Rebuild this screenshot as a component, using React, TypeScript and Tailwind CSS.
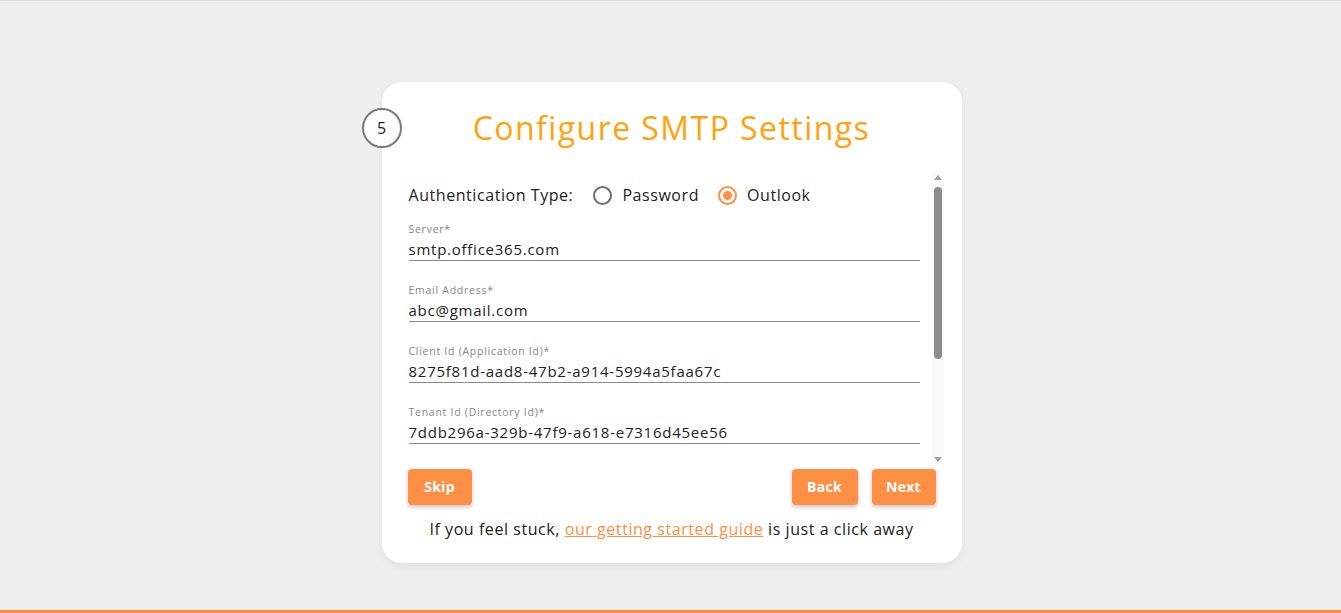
import React from "react";

const fields = [
  { label: "Server*", value: "smtp.office365.com" },
  { label: "Email Address*", value: "abc@gmail.com" },
  { label: "Client Id (Application Id)*", value: "8275f81d-aad8-47b2-a914-5994a5faa67c" },
  { label: "Tenant Id (Directory Id)*", value: "7ddb296a-329b-47f9-a618-e7316d45ee56" },
];

const Radio = ({ checked, label }: { checked?: boolean; label: string }) => (
  <label className="flex items-center gap-[10px]">
    <span
      className={`flex h-[19px] w-[19px] items-center justify-center rounded-full border-2 ${
        checked ? "border-[#ff8f45]" : "border-[#6f6f6f]"
      }`}
    >
      {checked && <span className="h-[9px] w-[9px] rounded-full bg-[#ff8f45]" />}
    </span>
    <span>{label}</span>
  </label>
);

const btn =
  "inline-flex h-[36px] items-center justify-center rounded-[4px] bg-[#ff8f45] text-[14px] leading-[20px] font-bold tracking-[0.02em] text-white shadow-[0_2px_4px_rgba(0,0,0,0.25)]";

const App = () => {
  return (
    <div
      className="flex min-h-[613px] flex-col bg-[#eeeeee] tracking-[0.035em] text-[#222]"
      style={{ fontFamily: "'Open Sans', 'Liberation Sans', sans-serif" }}
    >
      <div className="h-px bg-[#dcdcdc]" />
      <main className="flex flex-1 justify-center pl-[2px] pt-[81px]">
        <div className="relative h-[481px] w-[580px] rounded-[20px] bg-white px-[26px] pt-[24px] shadow-[0_3px_8px_rgba(0,0,0,0.06)]">
          {/* step number */}
          <div className="absolute left-[-20px] top-[26px] flex h-[40px] w-[40px] items-center justify-center rounded-full border-2 border-[#7a7a7a] bg-white text-[16px] tracking-normal">
            5
          </div>

          <h1 className="text-center text-[32px] leading-[44px] tracking-[0.045em] text-[#ffa30f]">
            Configure SMTP Settings
          </h1>

          <div className="mr-[-8px] mt-[22px] flex h-[293px]">
            <div className="flex-1 overflow-hidden pl-px pr-[12px]">
              <div className="mt-[11px] flex h-[24px] items-center gap-[20px] text-[16px]">
                <span>Authentication Type:</span>
                <div className="flex items-center gap-[19px]">
                  <Radio label="Password" />
                  <Radio checked label="Outlook" />
                </div>
              </div>

              <div className="mt-[16px] space-y-[23px]">
                {fields.map((f) => (
                  <div key={f.label}>
                    <div className="h-[12px] text-[10.5px] leading-[12px] tracking-[0.07em] text-[#858585]">
                      {f.label}
                    </div>
                    <div className="mt-[4px] h-[22px] border-b border-[#8a8a8a] text-[15px] leading-[20px] tracking-[0.05em] text-[#222]">
                      {f.value}
                    </div>
                  </div>
                ))}
              </div>
            </div>

            {/* scrollbar */}
            <div className="flex w-[12px] flex-col items-center bg-[#f9f9f9] py-[3px]">
              <div className="h-0 w-0 border-x-[4px] border-b-[5px] border-x-transparent border-b-[#a3a3a3]" />
              <div className="mt-[7px] h-[172px] w-[8px] rounded-full bg-[#8c8c8c]" />
              <div className="flex-1" />
              <div className="h-0 w-0 border-x-[4px] border-t-[5px] border-x-transparent border-t-[#a3a3a3]" />
            </div>
          </div>

          <div className="mt-[4px] flex items-center justify-between">
            <button className={`${btn} w-[64px]`}>Skip</button>
            <div className="flex gap-[14px]">
              <button className={`${btn} w-[66px]`}>Back</button>
              <button className={`${btn} w-[64px]`}>Next</button>
            </div>
          </div>

          <p className="mt-[13px] text-center text-[16px] leading-[22px]">
            If you feel stuck,{" "}
            <a href="#" className="text-[#ff8f45] underline">
              our getting started guide
            </a>{" "}
            is just a click away
          </p>
        </div>
      </main>
      <div className="h-[3px] bg-[#ff8c42]" />
    </div>
  );
};

export default App;
